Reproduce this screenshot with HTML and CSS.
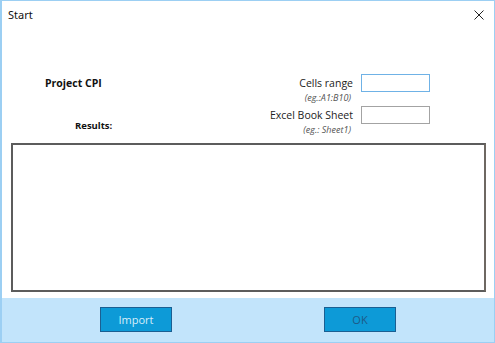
FILE: index.html
```html
<!DOCTYPE html>
<html>
<head>
    <title>Start</title>
    <meta charset="utf8" />
    <link rel="stylesheet" href="styles.css">
</head>
<body>
    <div class="window">
        <div class="titlebar">
            <span class="title">Start</span>
            <svg class="close" width="10" height="10" viewBox="0 0 10 10">
                <path d="M0.5 0.5 L9.5 9.5 M9.5 0.5 L0.5 9.5" stroke="#222" stroke-width="1" fill="none"/>
            </svg>
        </div>

        <div class="content">
            <div class="top">
                <div class="left">
                    <div class="project">Project CPI</div>
                    <div class="results-label">Results:</div>
                </div>
                <div class="fields">
                    <div class="field">
                        <div class="label-box">
                            <div class="label">Cells range</div>
                            <div class="hint">(eg.:A1:B10)</div>
                        </div>
                        <input type="text" class="input focused">
                    </div>
                    <div class="field">
                        <div class="label-box">
                            <div class="label">Excel Book Sheet</div>
                            <div class="hint">(eg.: Sheet1)</div>
                        </div>
                        <input type="text" class="input">
                    </div>
                </div>
            </div>
            <div class="results"></div>
        </div>

        <div class="footer">
            <button class="btn import">Import</button>
            <button class="btn ok">OK</button>
        </div>
    </div>
</body>
</html>
```

FILE: styles.css
```css
* {
    box-sizing: border-box;
    margin: 0;
    padding: 0;
}

body {
    background: #ffffff;
    font-family: "Open Sans", "Liberation Sans", sans-serif;
    width: 495px;
    height: 343px;
    overflow: hidden;
}

.window {
    width: 495px;
    height: 343px;
    border: 1px solid #9ccff3;
    border-left-width: 2px;
    display: flex;
    flex-direction: column;
    background: #ffffff;
}

.titlebar {
    height: 29px;
    display: flex;
    align-items: center;
    justify-content: space-between;
    padding: 0 9px 2px 6px;
}

.title {
    font-family: "Noto Sans", "Open Sans", sans-serif;
    font-size: 11px;
    color: #111;
}

.close {
    margin-right: 1px;
}

.content {
    flex: 1;
    display: flex;
    flex-direction: column;
}

.top {
    height: 113px;
    display: flex;
}

.left {
    width: 258px;
    padding-left: 43px;
    padding-top: 46px;
}

.project {
    font-size: 10.5px;
    font-weight: bold;
    color: #111;
}

.results-label {
    font-size: 9.5px;
    font-weight: bold;
    color: #111;
    margin-top: 29px;
    margin-left: 30px;
}

.fields {
    padding-top: 44px;
    display: flex;
    flex-direction: column;
    gap: 2px;
}

.field {
    display: flex;
    align-items: flex-start;
    gap: 8px;
}

.label-box {
    width: 93px;
    text-align: right;
    margin-top: 2px;
}

.label {
    font-size: 10.5px;
    color: #222;
    line-height: 14px;
}

.hint {
    font-size: 9px;
    font-style: italic;
    color: #555;
    line-height: 12px;
    margin-top: 2px;
    padding-right: 2px;
}

.input {
    width: 69px;
    height: 18px;
    border: 1px solid #a3a3a3;
    background: #fff;
    outline: none;
}

.input.focused {
    border-color: #6fb2e6;
}

.results {
    margin: 0 8px 6px 9px;
    height: 149px;
    border: 2px solid #5c5c5c;
    border-right-color: #6e6862;
    background: #ffffff;
}

.footer {
    height: 44px;
    background: #c2e4fb;
    display: flex;
    align-items: flex-start;
    padding-top: 9px;
    padding-left: 98px;
    gap: 152px;
}

.btn {
    width: 72px;
    height: 25px;
    background: #0d9ad7;
    border: 1px solid #1b5f92;
    font-family: "Open Sans", "Liberation Sans", sans-serif;
    font-size: 11px;
    cursor: pointer;
}

.import {
    color: #d8eefa;
}

.ok {
    color: #1d5b88;
}
```
